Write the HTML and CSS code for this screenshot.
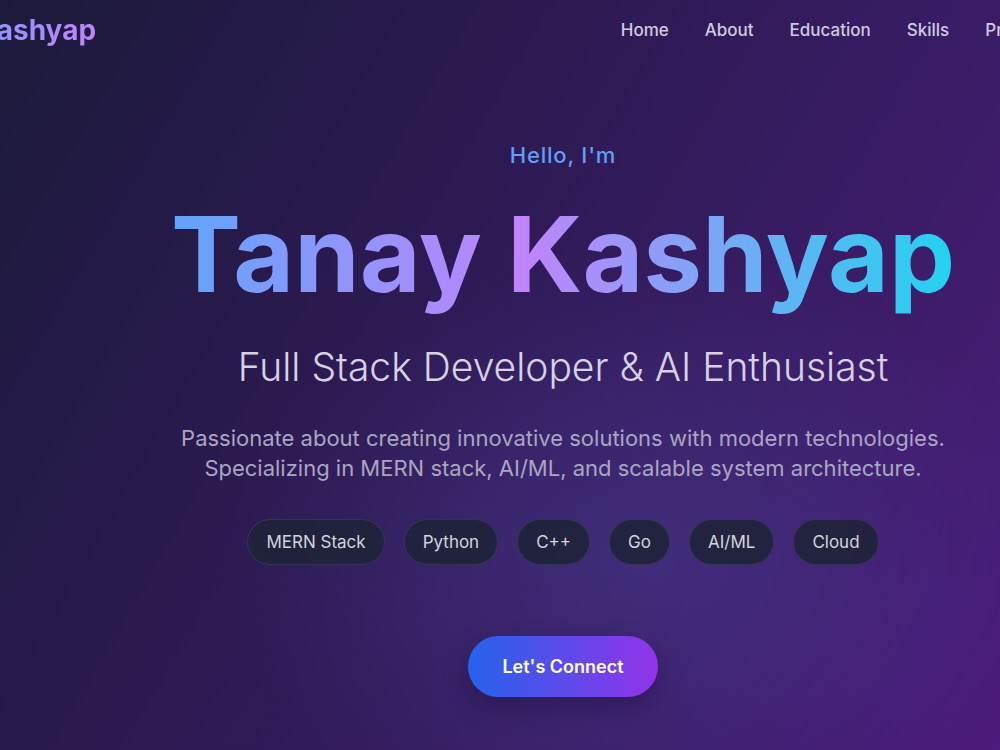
FILE: index.html
```html
<!DOCTYPE html>
<html lang="en">
<head>
  <meta charset="UTF-8">
  <title>Tanay Kashyap | Portfolio</title>
  <link rel="stylesheet" href="styles.css">
</head>
<body>
<div class="page">
  <header class="topbar">
    <a class="logo" href="#home">Tanay Kashyap</a>
    <nav class="nav">
      <a href="#home">Home</a>
      <a href="#about">About</a>
      <a href="#education">Education</a>
      <a href="#skills">Skills</a>
      <a href="#projects">Projects</a>
      <a href="#experience">Experience</a>
      <a href="#contact">Contact</a>
    </nav>
  </header>

  <section class="hero" id="home">
    <p class="hello">Hello, I'm</p>
    <h1 class="name">Tanay Kashyap</h1>
    <h2 class="role">Full Stack Developer &amp; AI Enthusiast</h2>
    <p class="intro">Passionate about creating innovative solutions with modern technologies.<br>
      Specializing in MERN stack, AI/ML, and scalable system architecture.</p>
    <ul class="chips">
      <li>MERN Stack</li>
      <li>Python</li>
      <li>C++</li>
      <li>Go</li>
      <li>AI/ML</li>
      <li>Cloud</li>
    </ul>
    <a class="cta" href="#contact">Let's Connect</a>
  </section>
</div>
</body>
</html>
```

FILE: styles.css
```css
html, body { margin: 0; height: 100%; }
body {
  font-family: Inter, "Noto Sans", sans-serif;
  color: #e5e3f0;
  overflow: hidden;
  background:
    radial-gradient(ellipse 420px 300px at 640px 560px, rgba(72, 66, 150, 0.45), rgba(72, 66, 150, 0) 100%),
    linear-gradient(120deg, #1c1a3b 0%, #2c1a52 40%, #3a1c66 70%, #4d1c7c 100%);
}
a { text-decoration: none; color: inherit; }

.page { width: 1000px; height: 750px; }

.topbar {
  display: flex;
  align-items: center;
  justify-content: space-between;
  width: 1392px;
  margin-left: -113px;
  height: 60px;
}
.logo {
  font-size: 28px;
  font-weight: 700;
  background: linear-gradient(90deg, #60a5fa, #c084fc);
  -webkit-background-clip: text;
  background-clip: text;
  color: transparent;
}
.nav { display: flex; gap: 36px; }
.nav a { font-size: 17px; font-weight: 500; color: #cfcbe0; }

.hero {
  width: 1126px;
  display: flex;
  flex-direction: column;
  align-items: center;
  text-align: center;
}
.hello {
  margin: 82px 0 0;
  font-size: 22px;
  font-weight: 500;
  letter-spacing: 0.8px;
  color: #5f9ff5;
}
.name {
  margin: 24px 0 0;
  font-size: 105px;
  line-height: 124px;
  font-weight: 700;
  letter-spacing: 0;
  background: linear-gradient(90deg, #60a5fa 0%, #c084fc 45%, #22d3ee 100%);
  -webkit-background-clip: text;
  background-clip: text;
  color: transparent;
}
.role {
  margin: 27px 0 0;
  font-size: 39px;
  font-weight: 300;
  color: #d6d2e4;
}
.intro {
  margin: 33px 0 0;
  font-size: 22px;
  line-height: 30px;
  color: #aaa6c0;
}
.chips {
  display: flex;
  gap: 19px;
  list-style: none;
  margin: 36px 0 0;
  padding: 0;
}
.chips li {
  padding: 12px 18px;
  font-size: 17px;
  line-height: 20px;
  color: #d4d3df;
  background: rgba(31, 35, 58, 0.92);
  border: 1px solid rgba(70, 76, 110, 0.45);
  border-radius: 999px;
}
.cta {
  margin-top: 71px;
  padding: 20px 34px;
  font-size: 18px;
  line-height: 21px;
  font-weight: 600;
  color: #fff;
  border-radius: 999px;
  background: linear-gradient(90deg, #2563eb, #9333ea);
  box-shadow: 0 10px 24px rgba(20, 10, 50, 0.35);
}
```
